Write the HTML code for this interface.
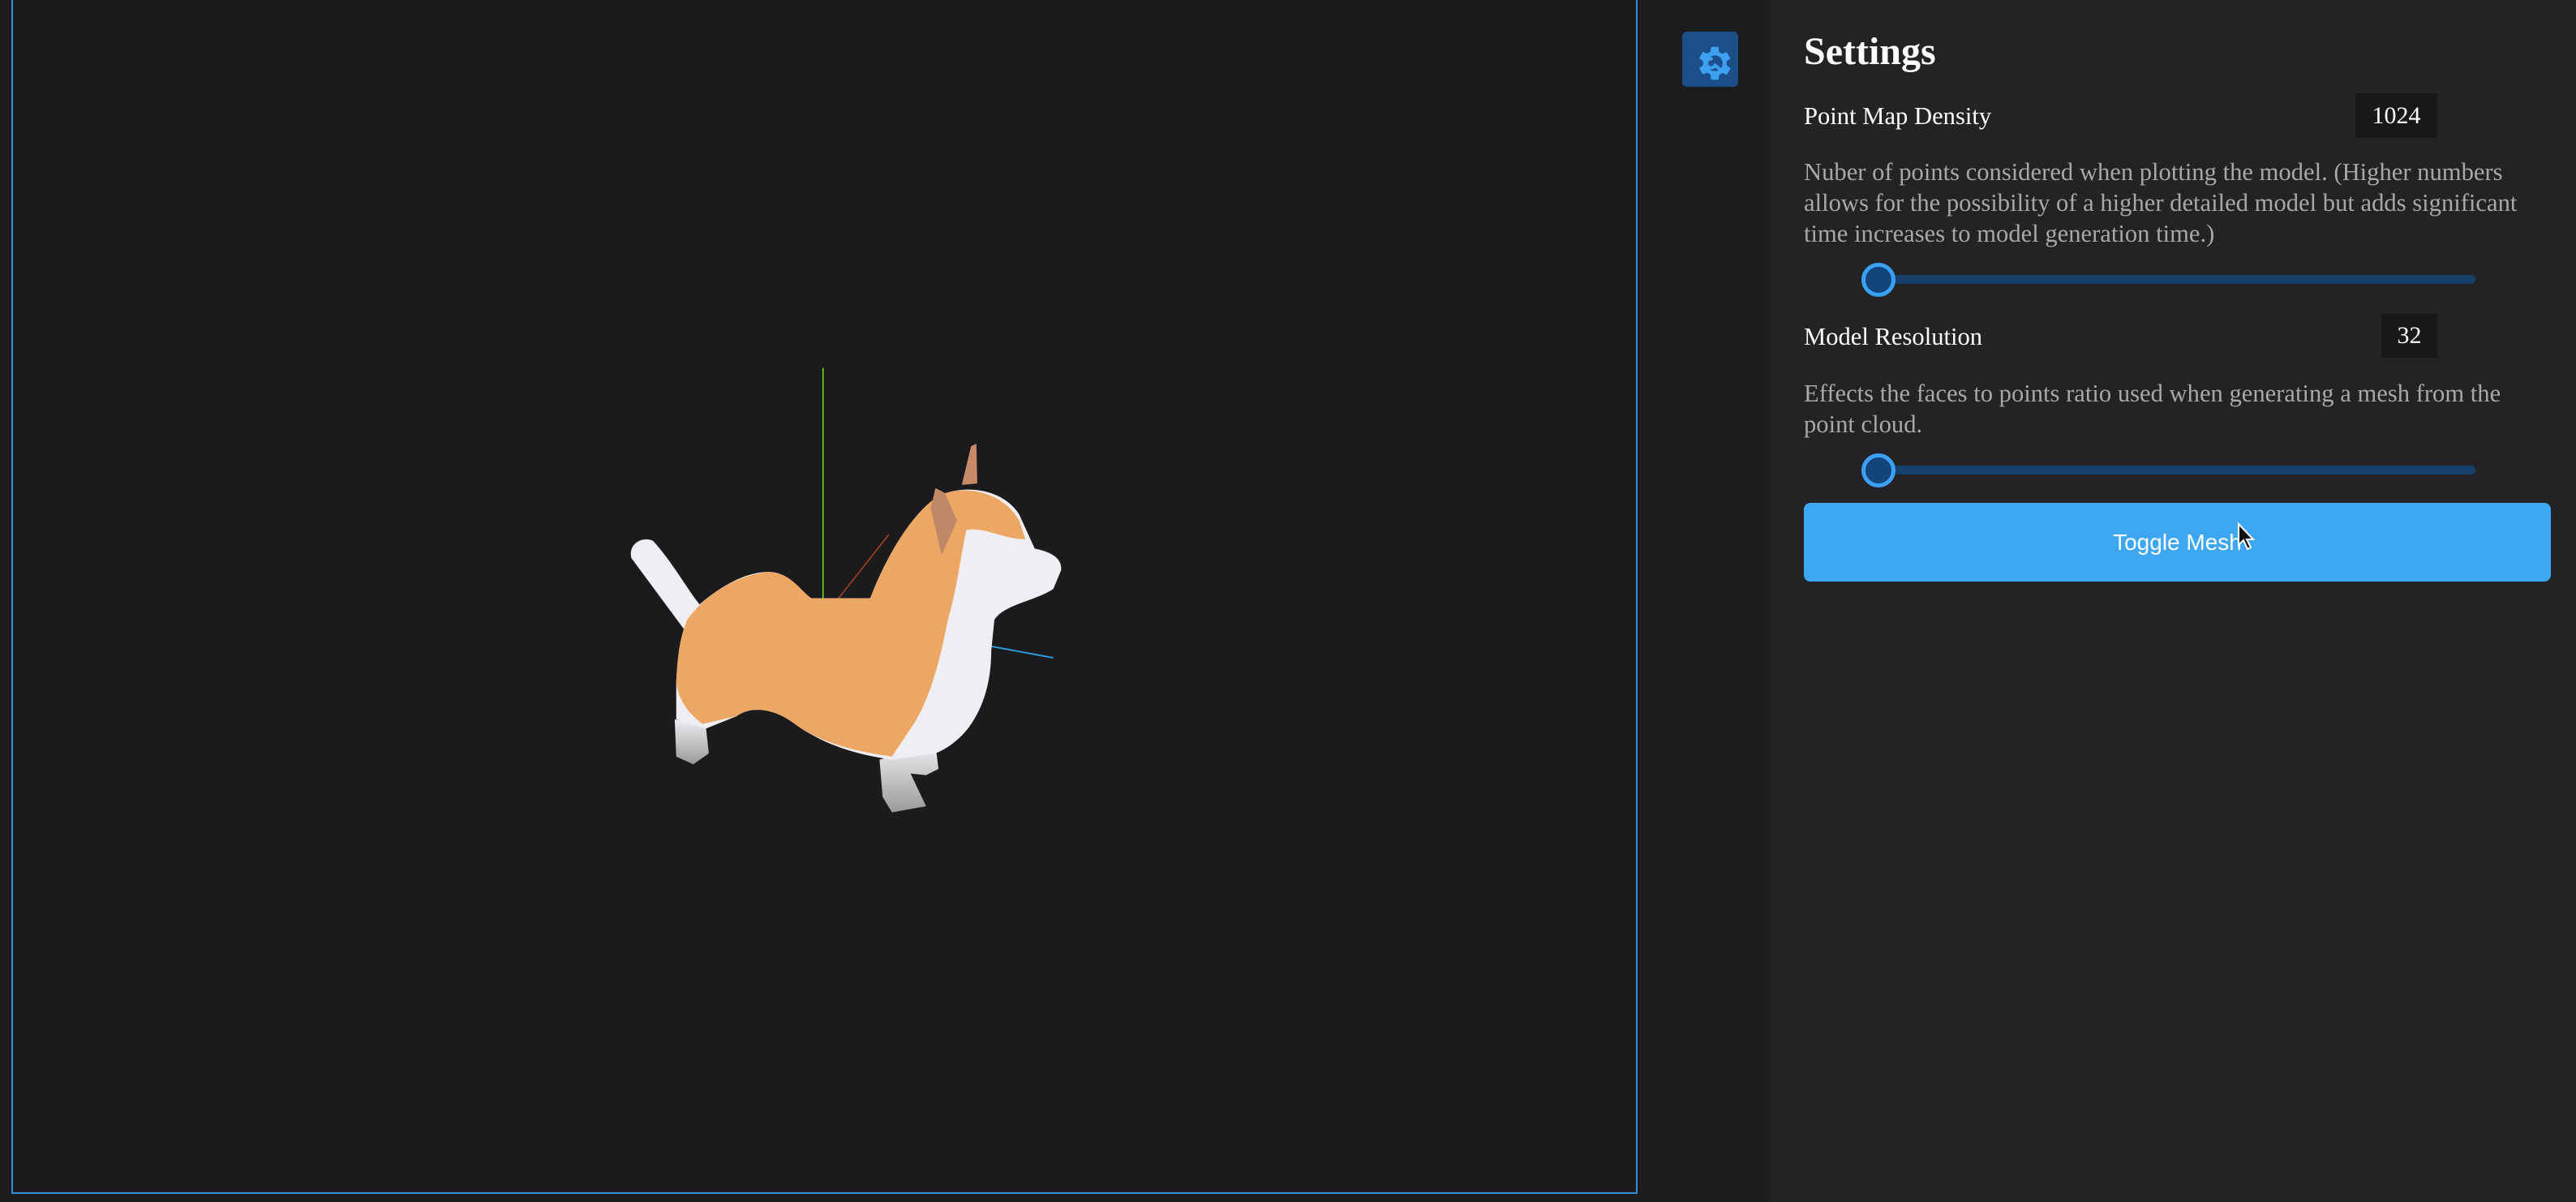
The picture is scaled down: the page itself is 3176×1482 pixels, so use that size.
<!DOCTYPE html>
<html><head><style>
html,body{margin:0;padding:0;width:3176px;height:1482px;overflow:hidden;background:#1c1c1e;font-family:"Liberation Serif",serif;}
.vp{position:absolute;left:14px;top:-2px;width:2005px;height:1474px;border:2px solid #2f8fd8;background:#1b1b1d;box-sizing:border-box;}
.side{position:absolute;left:2182px;top:0;width:994px;height:1482px;background:#232326;}
.t{position:absolute;color:#fff;white-space:nowrap;}
.d{position:absolute;left:2224px;width:905px;color:#a8a8a8;font-size:30.6px;line-height:38px;}
.num{position:absolute;background:#18181a;color:#fff;font-size:30px;text-align:center;}
.track{position:absolute;left:2315px;width:737px;height:11px;border-radius:6px;background:#173f6c;}
.thumb{position:absolute;width:32px;height:32px;border-radius:50%;border:5px solid #3aa0f0;background:#14457a;}
.btn{position:absolute;left:2224px;top:620px;width:921px;height:97px;border-radius:8px;background:#3ea7f3;color:#fff;font-family:"Liberation Sans",sans-serif;font-size:28px;text-align:center;line-height:97px;}
</style></head><body>
<div class="vp"></div>
<svg style="position:absolute;left:740px;top:420px" width="600" height="600" viewBox="0 0 1568 1568">
<defs>
<linearGradient id="lg" x1="0" y1="0" x2="0" y2="1"><stop offset="0" stop-color="#eeeef2"/><stop offset="1" stop-color="#9a9a9c"/></linearGradient>
</defs>
<line x1="718" y1="88" x2="718" y2="850" stroke="#7cdc20" stroke-width="4"/>
<line x1="760" y1="840" x2="930" y2="625" stroke="#b04020" stroke-width="4"/>
<line x1="1260" y1="985" x2="1460" y2="1022" stroke="#2a9ee0" stroke-width="5"/>
<path d="M240,1220 L245,1340 L300,1365 L350,1330 L340,1240 Z" fill="url(#lg)"/>
<path d="M900,1350 L910,1470 L940,1520 L1050,1500 L1000,1395 L1050,1400 L1090,1380 L1080,1300 Z" fill="url(#lg)"/>
<path d="M270,930 L100,700 C90,650 140,630 170,645 C230,710 280,800 320,850 C400,780 480,745 540,745 C610,745 640,800 680,830 L870,830 C920,700 1000,560 1090,500 C1180,460 1300,480 1350,560 L1400,670 C1450,680 1490,700 1485,740 L1460,800 C1400,840 1300,850 1270,900 L1260,1000 C1260,1150 1200,1280 1080,1330 L940,1350 C800,1330 700,1290 620,1230 C550,1180 480,1180 440,1210 L340,1250 L245,1220 L245,1100 C250,1000 260,950 280,900 Z" fill="#efeef2"/>
<path d="M280,900 C330,830 420,760 540,745 C610,745 640,800 680,830 L870,830 C920,700 1000,560 1090,500 C1180,460 1300,490 1350,580 L1370,640 C1300,640 1240,600 1180,610 C1160,700 1150,800 1120,900 C1100,1000 1070,1150 1000,1250 L940,1340 C800,1320 700,1290 620,1230 C550,1180 480,1180 440,1210 L330,1235 C280,1200 250,1150 245,1100 C250,1000 260,950 280,900 Z" fill="#eda764"/>
<path d="M1065,540 L1080,475 L1110,490 L1150,580 L1100,690 Z" fill="#bf8968"/>
<path d="M1165,465 L1195,340 L1212,332 L1215,460 Z" fill="#c68a66"/>
</svg>
<div class="side"></div>
<div style="position:absolute;left:2074px;top:39px;width:69px;height:68px;border-radius:6px;background:#1c4f8a;"></div>
<svg style="position:absolute;left:2085px;top:49px" width="54" height="58" viewBox="0 0 24 24">
<path fill="#3ea0f0" d="M19.4 13a7.5 7.5 0 0 0 0-2l2.1-1.6-2-3.5-2.5 1a7 7 0 0 0-1.7-1L15 3h-4l-.4 2.7a7 7 0 0 0-1.7 1l-2.5-1-2 3.5L6.6 11a7.5 7.5 0 0 0 0 2l-2.2 1.6 2 3.5 2.5-1a7 7 0 0 0 1.7 1L11 21h4l.4-2.7a7 7 0 0 0 1.7-1l2.5 1 2-3.5z"/>
<circle cx="13" cy="12" r="4.3" fill="#1c4f8a"/>
<path d="M11 9.5a2.5 2.5 0 1 0 2.2 3.6L16.5 16" stroke="#3ea0f0" stroke-width="1.8" fill="none" stroke-linecap="round"/>
</svg>
<div class="t" style="left:2224px;top:36px;font-size:48px;font-weight:bold;">Settings</div>
<div class="t" style="left:2224px;top:126px;font-size:30.6px;">Point Map Density</div>
<div class="num" style="left:2904px;top:115px;width:101px;height:55px;line-height:55px;">1024</div>
<div class="d" style="top:193px;">Nuber of points considered when plotting the model. (Higher numbers allows for the possibility of a higher detailed model but adds significant time increases to model generation time.)</div>
<div class="track" style="top:339px;"></div>
<div class="thumb" style="left:2295px;top:324px;"></div>
<div class="t" style="left:2224px;top:398px;font-size:30.6px;">Model Resolution</div>
<div class="num" style="left:2936px;top:387px;width:69px;height:54px;line-height:54px;">32</div>
<div class="d" style="top:466px;">Effects the faces to points ratio used when generating a mesh from the point cloud.</div>
<div class="track" style="top:574px;"></div>
<div class="thumb" style="left:2295px;top:559px;"></div>
<div class="btn">Toggle Mesh</div>
<svg style="position:absolute;left:2758px;top:644px" width="24" height="36" viewBox="0 0 12 18"><path d="M1 1 L1 14 L4 11 L6.5 16.5 L8.5 15.5 L6 10.5 L10 10.5 Z" fill="#111" stroke="#fff" stroke-width="1"/></svg>
</body></html>
